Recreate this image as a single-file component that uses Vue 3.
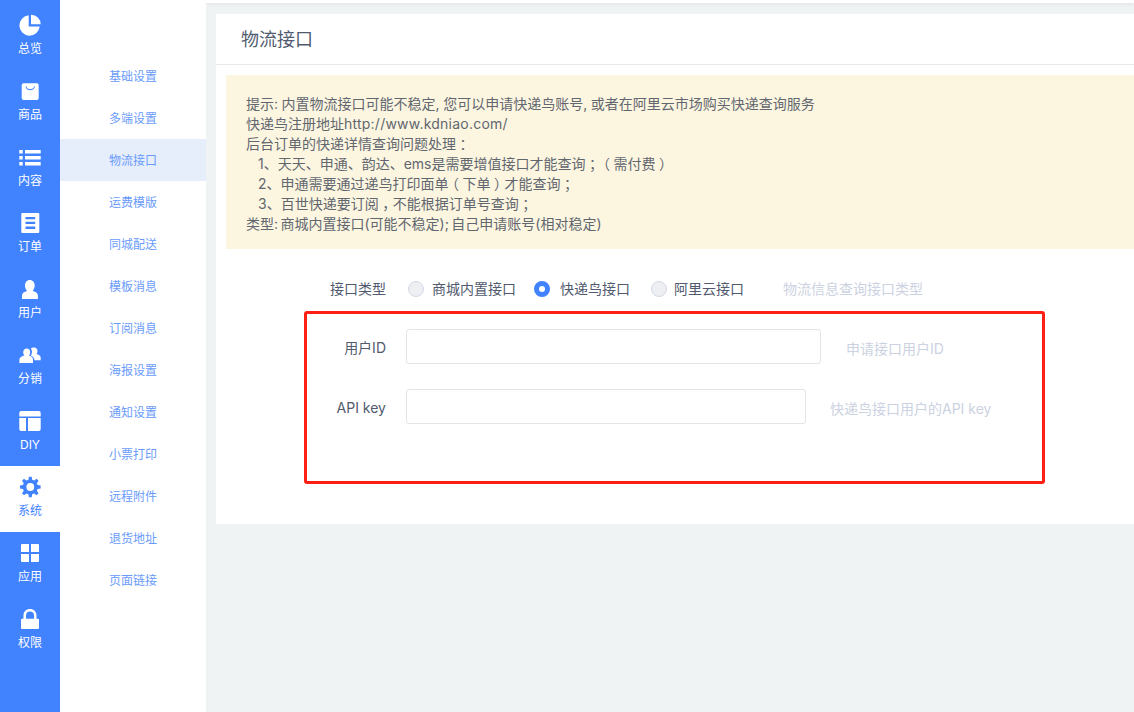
<script setup>
function gear(cx, cy, ro, ri, hole, n) {
  let d = ''
  const step = (Math.PI * 2) / n
  for (let i = 0; i < n; i++) {
    const a = i * step - Math.PI / 2
    const pts = [
      [ri, a - step * 0.32],
      [ro, a - step * 0.17],
      [ro, a + step * 0.17],
      [ri, a + step * 0.32]
    ]
    pts.forEach(([r, t], j) => {
      const x = (cx + r * Math.cos(t)).toFixed(2)
      const y = (cy + r * Math.sin(t)).toFixed(2)
      d += (i === 0 && j === 0 ? 'M' : 'L') + x + ' ' + y + ' '
    })
  }
  d += `Z M${cx + hole} ${cy} A${hole} ${hole} 0 1 0 ${cx - hole} ${cy} A${hole} ${hole} 0 1 0 ${cx + hole} ${cy} Z`
  return d
}

const navItems = [
  { label: '总览', d: 'M10.7 2.3A10.2 10.2 0 1 0 21.7 13.6L10.7 13.6Z M13 1.7A9.6 9.6 0 0 1 22.7 11.2L13 11.2Z' },
  { label: '商品', d: 'M5.7 4.3H18.7A2 2 0 0 1 20.7 6.3V19A2 2 0 0 1 18.7 21H5.7A2 2 0 0 1 3.7 19V6.3A2 2 0 0 1 5.7 4.3Z M7.6 7.2C7.6 12.6 16.8 12.6 16.8 7.2L16 7.2C16 11.2 8.4 11.2 8.4 7.2Z' },
  { label: '内容', d: 'M1.3 5H4.7V8.5H1.3Z M7 5H22.7V8.5H7Z M1.3 11H4.7V14.5H1.3Z M7 11H22.7V14.5H7Z M1.3 17H4.7V20.5H1.3Z M7 17H22.7V20.5H7Z' },
  { label: '订单', d: 'M4.3 2H20.3A1 1 0 0 1 21.3 3V21A1 1 0 0 1 20.3 22H4.3A1 1 0 0 1 3.3 21V3A1 1 0 0 1 4.3 2Z M7.5 6V8.3H17.2V6Z M7.5 10.8V13.1H17.2V10.8Z M7.5 15.6V17.9H17.2V15.6Z' },
  { label: '用户', d: 'M11.8 3C14.7 3 16.7 5.4 16.7 8.6C16.7 11.2 15.6 13 14.6 14C17.5 14.7 19.9 16 19.9 18.6V22H4V18.6C4 16 6.3 14.7 9.1 14C8 13 7 11.2 7 8.6C7 5.4 8.9 3 11.8 3Z' },
  { label: '分销', d: 'M8.7 5.5C10.7 5.5 12.2 7.1 12.2 9.3C12.2 10.7 11.6 11.8 10.9 12.6C13.2 13.3 15 14.4 15 16.5V20H1.4V16.5C1.4 14.4 4.2 13.3 6.5 12.6C5.8 11.8 5.2 10.7 5.2 9.3C5.2 7.1 6.7 5.5 8.7 5.5Z M16.2 4.4C18.2 4.4 19.5 6 19.5 8C19.5 9.2 19.1 10.2 18.5 10.9C20.4 11.5 22.7 12.5 22.7 14.5V17.2H16.6C16.3 15 14.9 13.4 12.8 12.4C13.6 11.4 14 10.4 14 9.1C14 7.5 13.4 6.3 12.7 5.6C13.4 4.8 14.7 4.4 16.2 4.4Z' },
  { label: 'DIY', d: 'M3.3 2H20.7A2 2 0 0 1 22.7 4V7.5H1.3V4A2 2 0 0 1 3.3 2Z M1.3 9H8V22H3.3A2 2 0 0 1 1.3 20Z M10 9H22.7V20A2 2 0 0 1 20.7 22H10Z' },
  { label: '系统', d: gear(12.3, 12, 10.4, 7.6, 3.9, 8), active: true },
  { label: '应用', d: 'M4 3H11V11H3V4A1 1 0 0 1 4 3Z M13 3H20A1 1 0 0 1 21 4V11H13Z M3 13H11V21H4A1 1 0 0 1 3 20Z M13 13H21V20A1 1 0 0 1 20 21H13Z' },
  { label: '权限', d: 'M5.5 11.7V8.5C5.5 4.6 8.2 2 12 2C15.8 2 18.5 4.6 18.5 8.5V11.7H20A1 1 0 0 1 21 12.7V21A1 1 0 0 1 20 22H4A1 1 0 0 1 3 21V12.7A1 1 0 0 1 4 11.7Z M8 11.7H16V8.5C16 6 14.4 4.5 12 4.5C9.6 4.5 8 6 8 8.5Z' }
]

const subItems = ['基础设置', '多端设置', '物流接口', '运费模版', '同城配送', '模板消息', '订阅消息', '海报设置', '通知设置', '小票打印', '远程附件', '退货地址', '页面链接']

const radios = [
  { label: '商城内置接口' },
  { label: '快递鸟接口', checked: true },
  { label: '阿里云接口' }
]

// Split a line so full-width punctuation can sit mid-cell, as in the reference's font.
function parts(text) {
  return text.split(/([；，：（）]|http:\/\/www\.kdniao\.com\/)/).filter(Boolean).map((t) => ({
    t,
    c: '；，：（）'.includes(t) ? 'punct' : t.startsWith('http') ? 'url' : ''
  }))
}

const tipLines = [
  { text: '提示: 内置物流接口可能不稳定, 您可以申请快递鸟账号, 或者在阿里云市场购买快递查询服务' },
  { text: '快递鸟注册地址http://www.kdniao.com/' },
  { text: '后台订单的快递详情查询问题处理：' },
  { text: '1、天天、申通、韵达、ems是需要增值接口才能查询；（需付费）', indent: true },
  { text: '2、申通需要通过递鸟打印面单（下单）才能查询；', indent: true },
  { text: '3、百世快递要订阅，不能根据订单号查询；', indent: true },
  { text: '类型: 商城内置接口(可能不稳定); 自己申请账号(相对稳定)', tight: true }
].map((l) => ({ ...l, parts: parts(l.text) }))
</script>

<template>
  <div class="layout">
    <nav class="rail">
      <a v-for="item in navItems" :key="item.label" class="rail-item" :class="{ active: item.active }">
        <svg class="rail-icon" viewBox="0 0 24 24" width="24" height="24">
          <path :d="item.d" fill="currentColor" fill-rule="evenodd" />
        </svg>
        <span class="rail-label">{{ item.label }}</span>
      </a>
    </nav>

    <aside class="subnav">
      <a v-for="item in subItems" :key="item" class="subnav-item" :class="{ active: item === '物流接口' }">{{ item }}</a>
    </aside>

    <div class="content">
      <div class="topbar"></div>
      <main class="card">
        <header class="card-head">物流接口</header>
        <section class="tip">
          <p v-for="line in tipLines" :key="line.text" class="tip-line" :class="{ indent: line.indent, tight: line.tight }"><span v-for="(p, i) in line.parts" :key="i" :class="p.c">{{ p.t }}</span></p>
        </section>

        <form class="form" @submit.prevent>
          <div class="row radio-row">
            <label class="row-label">接口类型</label>
            <div class="radios">
              <label v-for="r in radios" :key="r.label" class="radio">
                <span class="radio-dot" :class="{ checked: r.checked }"></span>
                <span class="radio-text">{{ r.label }}</span>
              </label>
            </div>
            <span class="hint hint-radio">物流信息查询接口类型</span>
          </div>
          <div class="row">
            <label class="row-label">用户ID</label>
            <input class="input input-id" type="text" />
            <span class="hint">申请接口用户ID</span>
          </div>
          <div class="row">
            <label class="row-label">API key</label>
            <input class="input input-key" type="text" />
            <span class="hint">快递鸟接口用户的API key</span>
          </div>
        </form>
        <div class="annotation"></div>
      </main>
    </div>
  </div>
</template>

<style>
html, body { margin: 0; padding: 0; overflow: hidden; }
</style>

<style scoped>
.layout {
  display: flex;
  width: 1134px;
  height: 712px;
  overflow: hidden;
  background: #f0f3f4;
  font-family: Inter, "Noto Sans CJK SC", sans-serif;
  font-size: 14px;
}
.rail {
  width: 60px;
  flex: none;
  box-sizing: border-box;
  padding-top: 4px;
  background: #4182ff;
  color: #fff;
}
.rail-item {
  display: flex;
  flex-direction: column;
  align-items: center;
  height: 66px;
  padding-top: 9px;
  box-sizing: border-box;
}
.rail-item.active {
  background: #fff;
  color: #4182ff;
}
.rail-icon { display: block; }
.rail-label {
  font-size: 12px;
  line-height: 16px;
  margin-top: 4px;
}
.subnav {
  width: 146px;
  flex: none;
  box-sizing: border-box;
  padding-top: 55px;
  background: #fff;
}
.subnav-item {
  display: block;
  height: 42px;
  line-height: 44px;
  padding-left: 49px;
  font-size: 12px;
  color: #6a9bfb;
}
.subnav-item.active { background: #e6edfb; }
.content {
  flex: 1;
  min-width: 0;
}
.topbar {
  height: 3px;
  background: #fff;
  box-shadow: 0 1px 4px rgba(0, 21, 41, 0.08);
}
.card {
  position: relative;
  margin: 11px 0 0 10px;
  height: 510px;
  background: #fff;
}
.card-head {
  height: 50px;
  line-height: 52px;
  padding-left: 25px;
  font-size: 18px;
  color: #515a6e;
  border-bottom: 1px solid #e8eaec;
}
.tip {
  margin: 10px 0 0 10px;
  padding: 19px 20px 15px;
  background: #fcf6e1;
  color: #62666f;
  text-spacing-trim: space-all;
}
.tip-line {
  margin: 0;
  line-height: 20px;
  white-space: nowrap;
  word-spacing: -0.4px;
}
.tip-line.indent { padding-left: 12px; }
.tip-line.tight { word-spacing: -1.5px; }
.url { letter-spacing: 0.23px; }
.punct {
  font-feature-settings: "halt";
  padding: 0 3.5px;
}
.form { padding-top: 23px; }
.row {
  display: flex;
  align-items: center;
  height: 35px;
  margin-bottom: 25px;
  color: #515a6e;
}
.row-label {
  width: 170px;
  flex: none;
  text-align: right;
  margin-right: 20px;
  line-height: 20px;
  padding-top: 3px;
}
.radio-row {
  margin-top: -1px;
  margin-bottom: 23px;
}
.radio-row .row-label { padding-top: 0; }
.radios {
  display: flex;
  margin-left: 2px;
  gap: 18px;
}
.radio {
  display: flex;
  align-items: center;
  gap: 8px;
}
.radio:nth-child(2) { gap: 10px; margin-right: 3px; }
.radio:nth-child(3) { gap: 7px; margin-right: 3px; }
.radio-text { padding-bottom: 2px; }
.radio-dot {
  width: 16px;
  height: 16px;
  box-sizing: border-box;
  border-radius: 50%;
  border: 1px solid #d4d8e5;
  background: #eeeff3;
}
.radio-dot.checked {
  border: 5px solid #4182ff;
  background: #fff;
}
.hint {
  color: #ccd2e1;
  margin-left: 25px;
  padding-top: 2px;
}
.row:last-child .hint { margin-left: 24px; }
.hint-radio {
  margin-left: 36px;
  padding-top: 0;
  padding-bottom: 2px;
}
.input {
  height: 35px;
  box-sizing: border-box;
  border: 1px solid #e2e4e8;
  border-radius: 3px;
  background: #fff;
  outline: none;
  padding: 0 8px;
}
.input-id { width: 415px; }
.input-key { width: 400px; }
.annotation {
  position: absolute;
  left: 88px;
  top: 297px;
  width: 741px;
  height: 173px;
  box-sizing: border-box;
  border: 3px solid #ff1f14;
  border-radius: 3px;
  pointer-events: none;
}
</style>
